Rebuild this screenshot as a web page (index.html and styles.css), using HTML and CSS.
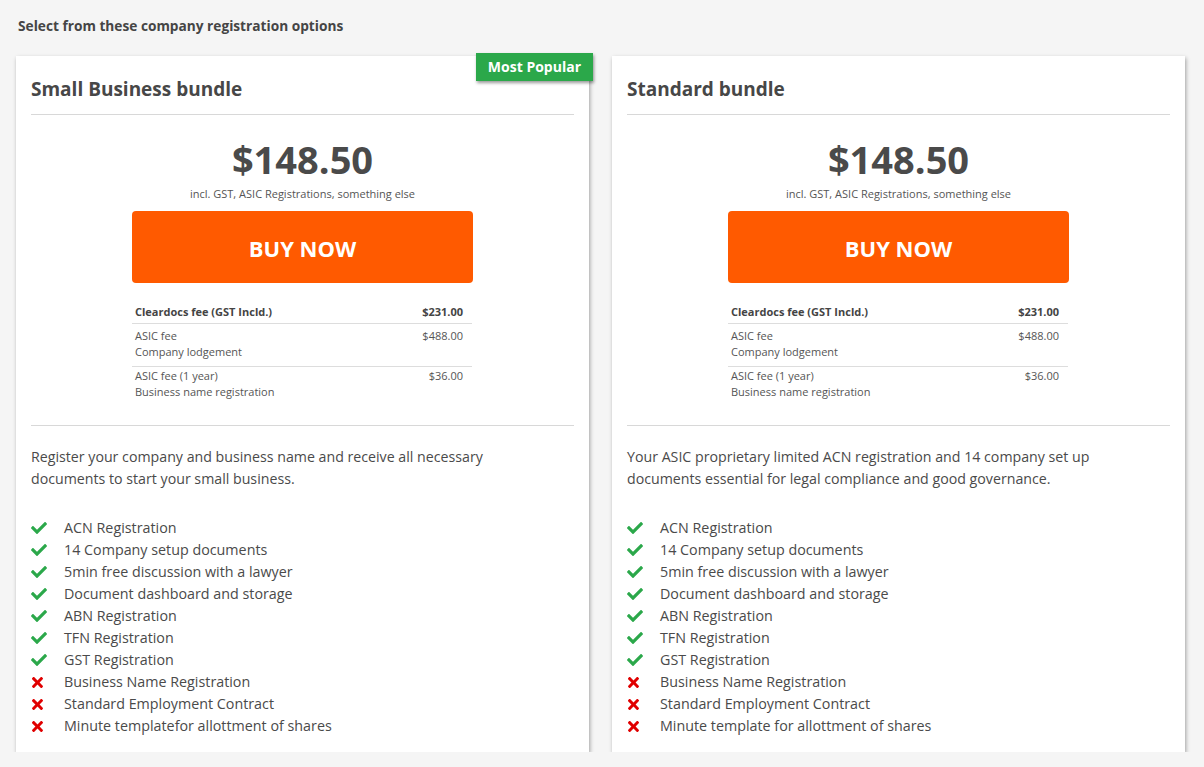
FILE: index.html
```html
<!DOCTYPE html>
<html lang="en">
<head>
  <meta charset="UTF-8" />
  <title>Company registration options</title>
  <link rel="stylesheet" href="styles.css">
</head>
<body>

  <h2 class="intro">Select from these company registration options</h2>

  <div class="bundles">

    <div class="bundle">
      <span class="badge">Most Popular</span>
      <h3 class="bundle-title">Small Business bundle</h3>
      <div class="price-box">
        <div class="price">$148.50</div>
        <div class="price-note">incl. GST, ASIC Registrations, something else</div>
        <a class="buy" href="#">BUY NOW</a>
        <table class="fees">
          <tr class="fee-head">
            <td>Cleardocs fee (GST Incld.)</td>
            <td class="amt">$231.00</td>
          </tr>
          <tr class="fee-mid">
            <td>ASIC fee<br>Company lodgement</td>
            <td class="amt">$488.00</td>
          </tr>
          <tr class="fee-last">
            <td>ASIC fee (1 year)<br>Business name registration</td>
            <td class="amt">$36.00</td>
          </tr>
        </table>
      </div>
      <p class="desc">Register your company and business name and receive all necessary documents to start your small business.</p>
      <ul class="features">
        <li><svg class="ico yes" viewBox="0 62 512 386" preserveAspectRatio="none"><path d="M173.9 439.4l-166.4-166.4c-10-10-10-26.2 0-36.2l36.2-36.2c10-10 26.2-10 36.2 0L192 312.7 432.1 72.6c10-10 26.2-10 36.2 0l36.2 36.2c10 10 10 26.2 0 36.2l-294.4 294.4c-10 10-26.2 10-36.2 0z"/></svg>ACN Registration</li>
        <li><svg class="ico yes" viewBox="0 62 512 386" preserveAspectRatio="none"><path d="M173.9 439.4l-166.4-166.4c-10-10-10-26.2 0-36.2l36.2-36.2c10-10 26.2-10 36.2 0L192 312.7 432.1 72.6c10-10 26.2-10 36.2 0l36.2 36.2c10 10 10 26.2 0 36.2l-294.4 294.4c-10 10-26.2 10-36.2 0z"/></svg>14 Company setup documents</li>
        <li><svg class="ico yes" viewBox="0 62 512 386" preserveAspectRatio="none"><path d="M173.9 439.4l-166.4-166.4c-10-10-10-26.2 0-36.2l36.2-36.2c10-10 26.2-10 36.2 0L192 312.7 432.1 72.6c10-10 26.2-10 36.2 0l36.2 36.2c10 10 10 26.2 0 36.2l-294.4 294.4c-10 10-26.2 10-36.2 0z"/></svg>5min free discussion with a lawyer</li>
        <li><svg class="ico yes" viewBox="0 62 512 386" preserveAspectRatio="none"><path d="M173.9 439.4l-166.4-166.4c-10-10-10-26.2 0-36.2l36.2-36.2c10-10 26.2-10 36.2 0L192 312.7 432.1 72.6c10-10 26.2-10 36.2 0l36.2 36.2c10 10 10 26.2 0 36.2l-294.4 294.4c-10 10-26.2 10-36.2 0z"/></svg>Document dashboard and storage</li>
        <li><svg class="ico yes" viewBox="0 62 512 386" preserveAspectRatio="none"><path d="M173.9 439.4l-166.4-166.4c-10-10-10-26.2 0-36.2l36.2-36.2c10-10 26.2-10 36.2 0L192 312.7 432.1 72.6c10-10 26.2-10 36.2 0l36.2 36.2c10 10 10 26.2 0 36.2l-294.4 294.4c-10 10-26.2 10-36.2 0z"/></svg>ABN Registration</li>
        <li><svg class="ico yes" viewBox="0 62 512 386" preserveAspectRatio="none"><path d="M173.9 439.4l-166.4-166.4c-10-10-10-26.2 0-36.2l36.2-36.2c10-10 26.2-10 36.2 0L192 312.7 432.1 72.6c10-10 26.2-10 36.2 0l36.2 36.2c10 10 10 26.2 0 36.2l-294.4 294.4c-10 10-26.2 10-36.2 0z"/></svg>TFN Registration</li>
        <li><svg class="ico yes" viewBox="0 62 512 386" preserveAspectRatio="none"><path d="M173.9 439.4l-166.4-166.4c-10-10-10-26.2 0-36.2l36.2-36.2c10-10 26.2-10 36.2 0L192 312.7 432.1 72.6c10-10 26.2-10 36.2 0l36.2 36.2c10 10 10 26.2 0 36.2l-294.4 294.4c-10 10-26.2 10-36.2 0z"/></svg>GST Registration</li>
        <li><svg class="ico no" viewBox="0 80 352 352"><path d="M242.7 256l100.1-100.1c12.3-12.3 12.3-32.2 0-44.5l-22.2-22.2c-12.3-12.3-32.2-12.3-44.5 0L176 189.3 75.9 89.2c-12.3-12.3-32.2-12.3-44.5 0L9.2 111.5c-12.3 12.3-12.3 32.2 0 44.5L109.3 256 9.2 356.1c-12.3 12.3-12.3 32.2 0 44.5l22.2 22.2c12.3 12.3 32.2 12.3 44.5 0L176 322.7l100.1 100.1c12.3 12.3 32.2 12.3 44.5 0l22.2-22.2c12.3-12.3 12.3-32.2 0-44.5L242.7 256z"/></svg>Business Name Registration</li>
        <li><svg class="ico no" viewBox="0 80 352 352"><path d="M242.7 256l100.1-100.1c12.3-12.3 12.3-32.2 0-44.5l-22.2-22.2c-12.3-12.3-32.2-12.3-44.5 0L176 189.3 75.9 89.2c-12.3-12.3-32.2-12.3-44.5 0L9.2 111.5c-12.3 12.3-12.3 32.2 0 44.5L109.3 256 9.2 356.1c-12.3 12.3-12.3 32.2 0 44.5l22.2 22.2c12.3 12.3 32.2 12.3 44.5 0L176 322.7l100.1 100.1c12.3 12.3 32.2 12.3 44.5 0l22.2-22.2c12.3-12.3 12.3-32.2 0-44.5L242.7 256z"/></svg>Standard Employment Contract</li>
        <li><svg class="ico no" viewBox="0 80 352 352"><path d="M242.7 256l100.1-100.1c12.3-12.3 12.3-32.2 0-44.5l-22.2-22.2c-12.3-12.3-32.2-12.3-44.5 0L176 189.3 75.9 89.2c-12.3-12.3-32.2-12.3-44.5 0L9.2 111.5c-12.3 12.3-12.3 32.2 0 44.5L109.3 256 9.2 356.1c-12.3 12.3-12.3 32.2 0 44.5l22.2 22.2c12.3 12.3 32.2 12.3 44.5 0L176 322.7l100.1 100.1c12.3 12.3 32.2 12.3 44.5 0l22.2-22.2c12.3-12.3 12.3-32.2 0-44.5L242.7 256z"/></svg>Minute templatefor allottment of shares</li>
      </ul>
    </div>

    <div class="bundle">
      <h3 class="bundle-title">Standard bundle</h3>
      <div class="price-box">
        <div class="price">$148.50</div>
        <div class="price-note">incl. GST, ASIC Registrations, something else</div>
        <a class="buy" href="#">BUY NOW</a>
        <table class="fees">
          <tr class="fee-head">
            <td>Cleardocs fee (GST Incld.)</td>
            <td class="amt">$231.00</td>
          </tr>
          <tr class="fee-mid">
            <td>ASIC fee<br>Company lodgement</td>
            <td class="amt">$488.00</td>
          </tr>
          <tr class="fee-last">
            <td>ASIC fee (1 year)<br>Business name registration</td>
            <td class="amt">$36.00</td>
          </tr>
        </table>
      </div>
      <p class="desc">Your ASIC proprietary limited ACN registration and 14 company set up documents essential for legal compliance and good governance.</p>
      <ul class="features">
        <li><svg class="ico yes" viewBox="0 62 512 386" preserveAspectRatio="none"><path d="M173.9 439.4l-166.4-166.4c-10-10-10-26.2 0-36.2l36.2-36.2c10-10 26.2-10 36.2 0L192 312.7 432.1 72.6c10-10 26.2-10 36.2 0l36.2 36.2c10 10 10 26.2 0 36.2l-294.4 294.4c-10 10-26.2 10-36.2 0z"/></svg>ACN Registration</li>
        <li><svg class="ico yes" viewBox="0 62 512 386" preserveAspectRatio="none"><path d="M173.9 439.4l-166.4-166.4c-10-10-10-26.2 0-36.2l36.2-36.2c10-10 26.2-10 36.2 0L192 312.7 432.1 72.6c10-10 26.2-10 36.2 0l36.2 36.2c10 10 10 26.2 0 36.2l-294.4 294.4c-10 10-26.2 10-36.2 0z"/></svg>14 Company setup documents</li>
        <li><svg class="ico yes" viewBox="0 62 512 386" preserveAspectRatio="none"><path d="M173.9 439.4l-166.4-166.4c-10-10-10-26.2 0-36.2l36.2-36.2c10-10 26.2-10 36.2 0L192 312.7 432.1 72.6c10-10 26.2-10 36.2 0l36.2 36.2c10 10 10 26.2 0 36.2l-294.4 294.4c-10 10-26.2 10-36.2 0z"/></svg>5min free discussion with a lawyer</li>
        <li><svg class="ico yes" viewBox="0 62 512 386" preserveAspectRatio="none"><path d="M173.9 439.4l-166.4-166.4c-10-10-10-26.2 0-36.2l36.2-36.2c10-10 26.2-10 36.2 0L192 312.7 432.1 72.6c10-10 26.2-10 36.2 0l36.2 36.2c10 10 10 26.2 0 36.2l-294.4 294.4c-10 10-26.2 10-36.2 0z"/></svg>Document dashboard and storage</li>
        <li><svg class="ico yes" viewBox="0 62 512 386" preserveAspectRatio="none"><path d="M173.9 439.4l-166.4-166.4c-10-10-10-26.2 0-36.2l36.2-36.2c10-10 26.2-10 36.2 0L192 312.7 432.1 72.6c10-10 26.2-10 36.2 0l36.2 36.2c10 10 10 26.2 0 36.2l-294.4 294.4c-10 10-26.2 10-36.2 0z"/></svg>ABN Registration</li>
        <li><svg class="ico yes" viewBox="0 62 512 386" preserveAspectRatio="none"><path d="M173.9 439.4l-166.4-166.4c-10-10-10-26.2 0-36.2l36.2-36.2c10-10 26.2-10 36.2 0L192 312.7 432.1 72.6c10-10 26.2-10 36.2 0l36.2 36.2c10 10 10 26.2 0 36.2l-294.4 294.4c-10 10-26.2 10-36.2 0z"/></svg>TFN Registration</li>
        <li><svg class="ico yes" viewBox="0 62 512 386" preserveAspectRatio="none"><path d="M173.9 439.4l-166.4-166.4c-10-10-10-26.2 0-36.2l36.2-36.2c10-10 26.2-10 36.2 0L192 312.7 432.1 72.6c10-10 26.2-10 36.2 0l36.2 36.2c10 10 10 26.2 0 36.2l-294.4 294.4c-10 10-26.2 10-36.2 0z"/></svg>GST Registration</li>
        <li><svg class="ico no" viewBox="0 80 352 352"><path d="M242.7 256l100.1-100.1c12.3-12.3 12.3-32.2 0-44.5l-22.2-22.2c-12.3-12.3-32.2-12.3-44.5 0L176 189.3 75.9 89.2c-12.3-12.3-32.2-12.3-44.5 0L9.2 111.5c-12.3 12.3-12.3 32.2 0 44.5L109.3 256 9.2 356.1c-12.3 12.3-12.3 32.2 0 44.5l22.2 22.2c12.3 12.3 32.2 12.3 44.5 0L176 322.7l100.1 100.1c12.3 12.3 32.2 12.3 44.5 0l22.2-22.2c12.3-12.3 12.3-32.2 0-44.5L242.7 256z"/></svg>Business Name Registration</li>
        <li><svg class="ico no" viewBox="0 80 352 352"><path d="M242.7 256l100.1-100.1c12.3-12.3 12.3-32.2 0-44.5l-22.2-22.2c-12.3-12.3-32.2-12.3-44.5 0L176 189.3 75.9 89.2c-12.3-12.3-32.2-12.3-44.5 0L9.2 111.5c-12.3 12.3-12.3 32.2 0 44.5L109.3 256 9.2 356.1c-12.3 12.3-12.3 32.2 0 44.5l22.2 22.2c12.3 12.3 32.2 12.3 44.5 0L176 322.7l100.1 100.1c12.3 12.3 32.2 12.3 44.5 0l22.2-22.2c12.3-12.3 12.3-32.2 0-44.5L242.7 256z"/></svg>Standard Employment Contract</li>
        <li><svg class="ico no" viewBox="0 80 352 352"><path d="M242.7 256l100.1-100.1c12.3-12.3 12.3-32.2 0-44.5l-22.2-22.2c-12.3-12.3-32.2-12.3-44.5 0L176 189.3 75.9 89.2c-12.3-12.3-32.2-12.3-44.5 0L9.2 111.5c-12.3 12.3-12.3 32.2 0 44.5L109.3 256 9.2 356.1c-12.3 12.3-12.3 32.2 0 44.5l22.2 22.2c12.3 12.3 32.2 12.3 44.5 0L176 322.7l100.1 100.1c12.3 12.3 32.2 12.3 44.5 0l22.2-22.2c12.3-12.3 12.3-32.2 0-44.5L242.7 256z"/></svg>Minute template for allottment of shares</li>
      </ul>
    </div>

  </div>

</body>
</html>
```

FILE: styles.css
```css
body {
  margin: 0;
  padding: 16px 16px 0 16px;
  background: #f5f5f5;
  font-family: "Open Sans", Arial, sans-serif;
  color: #4a4a4a;
}
.intro {
  margin: 0 0 20px 2px;
  font-size: 13.7px;
  font-weight: bold;
  color: #454545;
  line-height: 20px;
}
.bundles {
  display: flex;
  gap: 23px;
}
.bundle {
  position: relative;
  width: 573px;
  background: white;
  padding: 18px 15px 15px 15px;
  box-sizing: border-box;
  box-shadow: 1px 2px 4px rgba(0, 0, 0, 0.35);
}
.badge {
  position: absolute;
  top: -3px;
  right: -4px;
  background: #2ba84a;
  color: white;
  font-weight: bold;
  font-size: 14px;
  line-height: 28px;
  padding: 0 12px;
  box-shadow: 1px 2px 3px rgba(0, 0, 0, 0.4);
}
.bundle-title {
  margin: 0;
  font-size: 19px;
  line-height: 30px;
  color: #474747;
  padding-bottom: 10px;
  border-bottom: 1px solid #d8d8d8;
}
.price-box {
  width: 341px;
  margin: 0 auto;
  padding: 19px 0 19px 0;
  text-align: center;
}
.price {
  font-size: 38px;
  font-weight: bold;
  line-height: 50px;
  color: #4a4a4a;
}
.price-note {
  font-size: 11px;
  line-height: 16px;
  color: #555;
  margin-top: 2px;
  margin-bottom: 9px;
}
.buy {
  display: block;
  height: 72px;
  line-height: 74px;
  background: #ff5a00;
  border-radius: 4px;
  color: white;
  font-size: 22px;
  font-weight: bold;
  text-decoration: none;
}
.fees {
  width: 340px;
  margin-top: 18px;
  border-collapse: collapse;
  font-size: 11px;
  line-height: 16px;
  text-align: left;
  color: #555;
}
.fees td {
  padding: 3px 9px 6px 3px;
  vertical-align: top;
}
.fee-head td {
  font-weight: bold;
  color: #444;
  padding-bottom: 3px;
}
.fee-mid td {
  border-top: 1px solid #ddd;
  padding-top: 4px;
}
.fee-last td {
  border-top: 1px solid #ddd;
  padding-top: 1px;
}
.fees .amt {
  text-align: right;
}
.desc {
  margin: 0;
  padding: 20px 80px 0 0;
  border-top: 1px solid #d8d8d8;
  font-size: 14.2px;
  line-height: 22px;
  color: #4a4a4a;
}
.features {
  list-style: none;
  margin: 27px 0 0 0;
  padding: 0;
  font-size: 14.3px;
  line-height: 22px;
  color: #4a4a4a;
}
.features li {
  display: flex;
  align-items: center;
}
.ico {
  flex: none;
  margin-right: 17px;
}
.ico.yes {
  width: 16px;
  height: 12px;
  fill: #2ba84a;
}
.ico.no {
  width: 11px;
  height: 11px;
  margin-left: 1px;
  margin-right: 21px;
  fill: #e00000;
}
```
